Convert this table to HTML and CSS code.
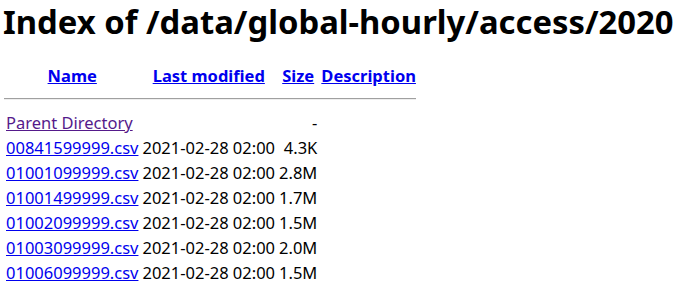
FILE: index.html
```html
<!DOCTYPE html>
<html>
<head>
<meta charset="utf-8">
<title>Index of /data/global-hourly/access/2020</title>
<link rel="stylesheet" href="styles.css">
</head>
<body>
<h1 class="title">Index of /data/global-hourly/access/2020</h1>
<table class="listing">
<tr><th class="ico"></th><th><a href="#">Name</a></th><th><a href="#">Last modified</a></th><th><a href="#">Size</a></th><th><a href="#">Description</a></th></tr>
<tr><th colspan="5" class="sep"><hr class="rule"></th></tr>
<tr><td class="ico"></td><td><a class="visited" href="#">Parent Directory</a></td><td>&nbsp;</td><td class="num">- </td><td>&nbsp;</td></tr>
<tr><td class="ico"></td><td><a href="#">00841599999.csv</a></td><td class="num">2021-02-28 02:00 </td><td class="num">4.3K</td><td>&nbsp;</td></tr>
<tr><td class="ico"></td><td><a href="#">01001099999.csv</a></td><td class="num">2021-02-28 02:00 </td><td class="num">2.8M</td><td>&nbsp;</td></tr>
<tr><td class="ico"></td><td><a href="#">01001499999.csv</a></td><td class="num">2021-02-28 02:00 </td><td class="num">1.7M</td><td>&nbsp;</td></tr>
<tr><td class="ico"></td><td><a href="#">01002099999.csv</a></td><td class="num">2021-02-28 02:00 </td><td class="num">1.5M</td><td>&nbsp;</td></tr>
<tr><td class="ico"></td><td><a href="#">01003099999.csv</a></td><td class="num">2021-02-28 02:00 </td><td class="num">2.0M</td><td>&nbsp;</td></tr>
<tr><td class="ico"></td><td><a href="#">01006099999.csv</a></td><td class="num">2021-02-28 02:00 </td><td class="num">1.5M</td><td>&nbsp;</td></tr>
</table>
</body>
</html>
```
FILE: styles.css
```css
html, body {
  margin: 0;
  padding: 0;
  background: #fff;
}
body {
  padding: 0 0 0 1px;
  font-family: "Noto Sans", "Open Sans", sans-serif;
  font-size: 16.5px;
  color: #000;
}
.title {
  font-size: 32.8px;
  font-weight: bold;
  margin: 0 0 19px 0;
  padding-left: 2px;
  line-height: 43px;
}
.listing {
  border-collapse: separate;
  border-spacing: 2px;
}
.listing th, .listing td {
  padding: 1px;
  line-height: 21px;
}
.listing th {
  font-weight: bold;
}
.listing .ico {
  padding: 0;
  width: 0;
}
.listing .num {
  text-align: right;
}
.listing a {
  color: #0000ee;
}
.listing a.visited {
  color: #551a8b;
}
.sep {
  padding: 0 1px;
}
.rule {
  margin: 8px 0 8px 0;
  border: 0;
  border-top: 1px solid #a0a0a0;
  border-bottom: 1px solid #eee;
}
```
